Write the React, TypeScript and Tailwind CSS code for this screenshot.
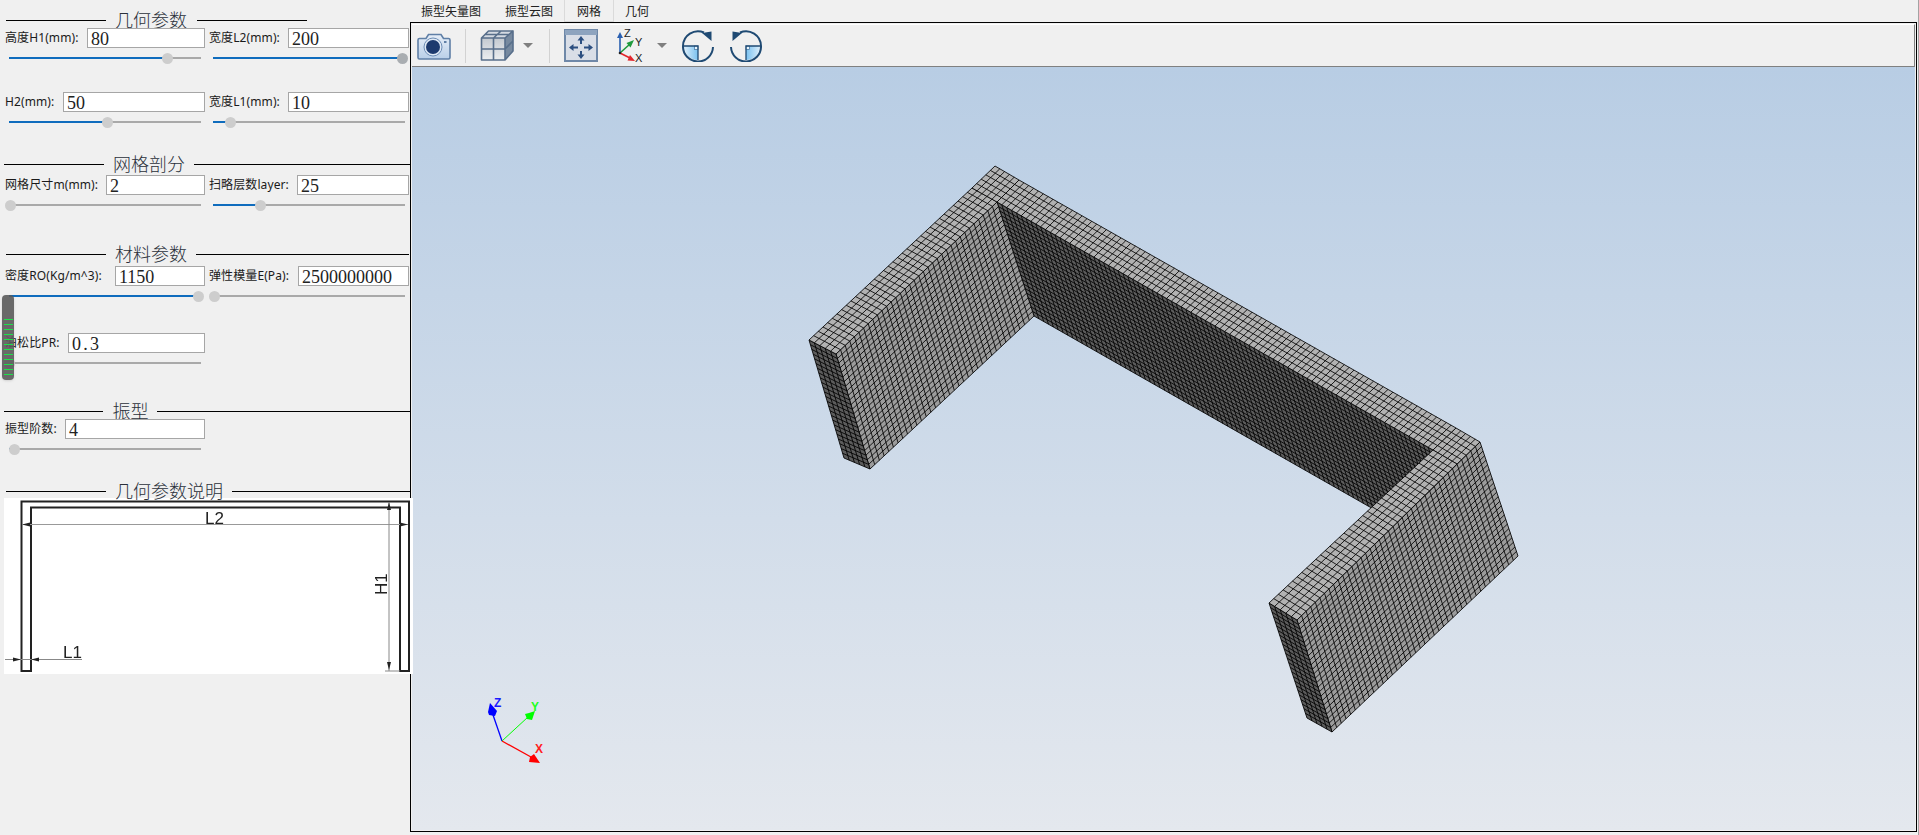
import React, { useMemo } from 'react';

type Pt = [number, number];

type FieldTypes = {
  label: string;
  value: string;
  inputWidth: string;
  thumb: number;
  hot?: boolean;
  spaced?: boolean;
};

// builds the element lines of one mesh face, a -> b is u, a -> d is v
const meshPath = (a: Pt, b: Pt, c: Pt, d: Pt, nu: number, nv: number) => {
  const at = (u: number, v: number) => {
    const x = a[0] * (1 - u) * (1 - v) + b[0] * u * (1 - v) + c[0] * u * v + d[0] * (1 - u) * v;
    const y = a[1] * (1 - u) * (1 - v) + b[1] * u * (1 - v) + c[1] * u * v + d[1] * (1 - u) * v;
    return `${x.toFixed(1)} ${y.toFixed(1)}`;
  };
  let path = '';
  for (let i = 0; i <= nu; i++) {
    path += `M${at(i / nu, 0)}L${at(i / nu, 1)}`;
  }
  for (let j = 0; j <= nv; j++) {
    path += `M${at(0, j / nv)}L${at(1, j / nv)}`;
  }
  return path;
};

const LIGHT = '#b2b2b2';
const MID = '#9c9c9c';
const DARK = '#5c5c5c';

const faces: { pts: [Pt, Pt, Pt, Pt]; nu: number; nv: number; fill: string }[] = [
  { pts: [[997, 202], [1433, 450], [1470, 564], [1034, 316]], nu: 90, nv: 25, fill: DARK },
  { pts: [[836, 354], [997, 202], [1034, 316], [870, 469]], nu: 35, nv: 25, fill: MID },
  { pts: [[809, 340], [836, 354], [870, 469], [844, 458]], nu: 5, nv: 25, fill: DARK },
  { pts: [[809, 340], [972, 188], [997, 202], [836, 354]], nu: 35, nv: 5, fill: LIGHT },
  { pts: [[972, 188], [995, 166], [1019, 180], [997, 202]], nu: 5, nv: 5, fill: LIGHT },
  { pts: [[1019, 180], [1456, 428], [1433, 450], [997, 202]], nu: 90, nv: 5, fill: LIGHT },
  { pts: [[1456, 428], [1480, 442], [1457, 464], [1433, 450]], nu: 5, nv: 5, fill: LIGHT },
  { pts: [[1480, 442], [1518, 556], [1332, 732], [1297, 620]], nu: 25, nv: 40, fill: MID },
  { pts: [[1269, 603], [1297, 620], [1332, 732], [1307, 718]], nu: 5, nv: 25, fill: DARK },
  { pts: [[1433, 450], [1457, 464], [1297, 620], [1269, 603]], nu: 5, nv: 35, fill: LIGHT },
];

const Mesh = () => {
  const paths = useMemo(
    () => faces.map(f => ({ ...f, d: meshPath(f.pts[0], f.pts[1], f.pts[2], f.pts[3], f.nu, f.nv) })),
    [],
  );
  return (
    <svg className="block" width="1503" height="763" viewBox="412 67 1503 763">
      {paths.map((f, i) => (
        <g key={i}>
          <polygon points={f.pts.map(p => p.join(',')).join(' ')} fill={f.fill} />
          <path d={f.d} stroke="#000" strokeWidth="0.85" fill="none" />
        </g>
      ))}
      {/* axis triad */}
      <line x1="502" y1="741" x2="492" y2="712" stroke="#0000ff" strokeWidth="1.3" />
      <polygon points="490,703 497,711 495,716 489,715 488,712" fill="#0000ff" />
      <line x1="502" y1="741" x2="528" y2="717" stroke="#00ff00" strokeWidth="1" />
      <polygon points="535,711 532,720 527,719 525,714 529,713" fill="#00ff00" />
      <line x1="502" y1="741" x2="531" y2="757" stroke="#ff0000" strokeWidth="1.3" />
      <polygon points="540,763 529,762 530,757 534,754" fill="#ff0000" />
      <text x="494" y="707" fontSize="12" fontWeight="700" fill="#1a1aff" fontFamily="Liberation Sans">Z</text>
      <text x="531" y="711" fontSize="12" fontWeight="700" fill="#22ff22" fontFamily="Liberation Sans">Y</text>
      <text x="535" y="753" fontSize="12" fontWeight="700" fill="#ff2020" fontFamily="Liberation Sans">X</text>
    </svg>
  );
};

const SectionTitle = ({ title, start, gapRight, end }: { title: string; start: string; gapRight: string; end: string }) => (
  <div className={`flex items-center h-4 ${start}`}>
    <div className="w-[100px] h-px bg-black" />
    <span className="ml-[9px] text-[18px] leading-4 text-[#2b303b] font-light whitespace-nowrap">{title}</span>
    <div className={`h-px bg-black ${gapRight} ${end}`} />
  </div>
);

const Slider = ({ thumb, hot }: { thumb: number; hot?: boolean }) => (
  <div className="relative ml-[4px] mt-1 w-[192px] h-3 flex items-center">
    <div className="w-full h-[2px] bg-[#a9a9a9]" />
    <div className="absolute left-0 top-[5px] h-[2px] bg-[#0f6cbd]" style={{ width: thumb }} />
    <div
      className={`absolute top-[0.5px] w-[11px] h-[11px] rounded-full ${hot ? 'bg-[#a9adb1]' : 'bg-[#cdcdcd]'}`}
      style={{ left: thumb - 5.5 }}
    />
  </div>
);

const Field = ({ label, value, inputWidth, thumb, hot, spaced }: FieldTypes) => (
  <div className="w-[200px]">
    <div className="flex items-center justify-between h-5">
      <span className="text-xs tracking-[0.1px] whitespace-nowrap text-[#1a1a1a]">{label}</span>
      <div
        className={`h-5 ${inputWidth} bg-white border border-[#a6a6a6] pl-[3px] pt-px flex items-center text-[18px] leading-none text-[#222] font-['Liberation_Serif',serif] ${spaced ? 'tracking-[2.25px]' : ''}`}
      >
        {value}
      </div>
    </div>
    <Slider thumb={thumb} hot={hot} />
  </div>
);

const Row = ({ className, children }: { className: string; children: React.ReactNode }) => (
  <div className={`flex pl-[5px] gap-[4px] ${className}`}>{children}</div>
);

const DimArrow = ({ points }: { points: string }) => <polygon points={points} fill="#222" />;

const ParamSketch = () => (
  <div className="ml-[4px] w-[409px] h-[176px] bg-white">
    <svg className="block blur-[0.35px]" width="409" height="176" viewBox="4 498 409 176">
      <path d="M21.5 671V501.5H409V671H400V507.5H31V671Z" fill="none" stroke="#222" strokeWidth="2" />
      <line x1="22" y1="524.5" x2="408" y2="524.5" stroke="#999" strokeWidth="1" />
      <DimArrow points="22,524.5 30,522.5 30,526.5" />
      <DimArrow points="408,524.5 400,522.5 400,526.5" />
      <line x1="389" y1="502" x2="389" y2="671" stroke="#888" strokeWidth="1" />
      <line x1="385" y1="671" x2="400" y2="671" stroke="#888" strokeWidth="1" />
      <DimArrow points="389,502 387,510 391,510" />
      <DimArrow points="389,670 387,662 391,662" />
      <line x1="5" y1="659.5" x2="82" y2="659.5" stroke="#888" strokeWidth="1" />
      <DimArrow points="21,659.5 13,657.5 13,661.5" />
      <DimArrow points="31,659.5 39,657.5 39,661.5" />
      <text x="205" y="524" fontSize="17" fill="#222" fontFamily="Liberation Sans">L2</text>
      <text x="63" y="658" fontSize="17" fill="#222" fontFamily="Liberation Sans">L1</text>
      <text x="0" y="0" fontSize="17" fill="#222" fontFamily="Liberation Sans" transform="translate(387 595) rotate(-90)">H1</text>
    </svg>
  </div>
);

const CameraIcon = () => (
  <svg width="34" height="30" viewBox="0 0 34 30" className="ml-[5px] shrink-0">
    <defs>
      <linearGradient id="cam" x1="0" y1="0" x2="0" y2="1">
        <stop offset="0" stopColor="#e6eef8" />
        <stop offset="1" stopColor="#b9cfe8" />
      </linearGradient>
    </defs>
    <path d="M2.5 7.5H9L11.5 3.5H24L26.5 7.5H31.5Q33 7.5 33 9V26.5Q33 28 31.5 28H2.5Q1 28 1 26.5V9Q1 7.5 2.5 7.5Z" fill="url(#cam)" stroke="#5f7fa6" strokeWidth="1.6" />
    <circle cx="16" cy="16" r="9" fill="#dfe9f5" stroke="#6d8db5" strokeWidth="1" />
    <circle cx="16" cy="16" r="7" fill="#1d3a6e" />
    <rect x="27" y="10" width="2.5" height="2" fill="#5f7fa6" />
  </svg>
);

const CubeIcon = () => (
  <svg width="34" height="31" viewBox="0 0 34 31" className="ml-[14px] shrink-0">
    <defs>
      <linearGradient id="cubeFront" x1="0" y1="0" x2="0" y2="1">
        <stop offset="0" stopColor="#c3c9d0" />
        <stop offset="1" stopColor="#eceef0" />
      </linearGradient>
    </defs>
    <path d="M1.5 8L8.5 1H33L25 8Z" fill="#d4dae2" />
    <path d="M25 8L33 1V21L25 30Z" fill="#76899f" />
    <rect x="1.5" y="8" width="23.5" height="22" fill="url(#cubeFront)" />
    <path
      d="M1.5 8L8.5 1H33L25 8ZM25 8L33 1V21L25 30ZM1.5 8H25V30H1.5ZM13.5 8V30M1.5 19H25M13.5 8L21 1M5 4.5H29M25 19L33 11"
      stroke="#586f8b"
      strokeWidth="1.6"
      fill="none"
      strokeLinejoin="round"
    />
  </svg>
);

const DropTriangle = ({ className }: { className: string }) => (
  <svg width="10" height="5" viewBox="0 0 10 5" className={`shrink-0 ${className}`}>
    <polygon points="0,0 10,0 5,5" fill="#7f7f7f" />
  </svg>
);

const FitIcon = () => (
  <svg width="34" height="33" viewBox="0 0 34 33" className="ml-[14px] shrink-0">
    <rect x="1" y="1" width="32" height="31" fill="#d9dee7" stroke="#6f88a8" strokeWidth="2" />
    <rect x="1" y="1" width="32" height="5" fill="#8ea4bf" />
    <path d="M17 10V15M17 22V27M8 18.5H14M20 18.5H26" stroke="#2c4f80" strokeWidth="2" />
    <path d="M17 7L13.5 11.5H20.5ZM17 30L13.5 25.5H20.5ZM5 18.5L9.5 15V22ZM29 18.5L24.5 15V22Z" fill="#2c4f80" />
  </svg>
);

const AxesIcon = () => (
  <svg width="34" height="34" viewBox="0 0 34 34" className="ml-[14px] shrink-0">
    <path d="M8 24V7" stroke="#2a5fb0" strokeWidth="1.6" />
    <polygon points="8,3 5,9 11,9" fill="#2a5fb0" />
    <path d="M8 24L18 15" stroke="#1f9a3c" strokeWidth="1.6" />
    <polygon points="22,11 14.5,14 18.5,18.5" fill="#1f9a3c" />
    <path d="M8 24L18 29" stroke="#e3262b" strokeWidth="1.6" />
    <polygon points="23,32 15.5,31.5 18,26" fill="#e3262b" />
    <circle cx="8" cy="24" r="1.3" fill="#222" />
    <text x="12" y="8" fontSize="11" fill="#222" fontFamily="Liberation Sans">Z</text>
    <text x="23" y="17" fontSize="11" fill="#222" fontFamily="Liberation Sans">Y</text>
    <text x="23" y="33" fontSize="11" fill="#222" fontFamily="Liberation Sans">X</text>
  </svg>
);

const RotateIcon = ({ className, id }: { className: string; id: string }) => (
  <svg width="32" height="32" viewBox="0 0 32 32" className={`shrink-0 ${className}`}>
    <defs>
      <linearGradient id={id} x1="0" y1="0" x2="1" y2="0">
        <stop offset="0" stopColor="#dceefb" />
        <stop offset="1" stopColor="#79c1f0" />
      </linearGradient>
    </defs>
    <path d="M2 16H16V30A14 14 0 0 1 2 16Z" fill={`url(#${id})`} />
    <rect x="12.5" y="16" width="3.5" height="3.5" fill="#e8f4fc" stroke="#3e6f9c" strokeWidth="0.7" />
    <path d="M1.5 16H16V30" stroke="#1f4a73" strokeWidth="1.3" fill="none" />
    <path d="M31 17A15 15 0 0 1 1 16A15 15 0 0 1 22 2.5" fill="none" stroke="#1f4a73" strokeWidth="2" />
    <polygon points="20,3 29.5,1.5 29.5,11" fill="#1f4a73" />
  </svg>
);

const ToolSep = ({ className }: { className: string }) => <div className={`w-px h-[34px] bg-[#d2d2d2] shrink-0 ${className}`} />;

const tabs = ['振型矢量图', '振型云图', '网格', '几何'];

const App: React.FC = () => {
  return (
    <div className="flex w-[1919px] h-[835px] overflow-hidden bg-[#f0f0f0] text-[#222] font-['Noto_Sans','Noto_Sans_CJK_SC',sans-serif]">
      <aside className="relative z-10 w-[410px] shrink-0 pt-3">
        <SectionTitle title="几何参数" start="ml-[6px]" gapRight="ml-[10px]" end="w-[110px]" />
        <Row className="">
          <Field label="高度H1(mm):" value="80" inputWidth="w-[118px]" thumb={158} />
          <Field label="宽度L2(mm):" value="200" inputWidth="w-[121px]" thumb={189} hot />
        </Row>
        <Row className="mt-7">
          <Field label="H2(mm):" value="50" inputWidth="w-[142px]" thumb={98} />
          <Field label="宽度L1(mm):" value="10" inputWidth="w-[121px]" thumb={17} />
        </Row>

        <div className="mt-7">
          <SectionTitle title="网格剖分" start="ml-[4px]" gapRight="ml-[9px]" end="w-[216px]" />
        </div>
        <Row className="mt-[3px]">
          <Field label="网格尺寸m(mm):" value="2" inputWidth="w-[99px]" thumb={1} />
          <Field label="扫略层数layer:" value="25" inputWidth="w-[112px]" thumb={47} />
        </Row>

        <div className="mt-[35px]">
          <SectionTitle title="材料参数" start="ml-[6px]" gapRight="ml-[9px]" end="w-[213px]" />
        </div>
        <Row className="mt-1">
          <Field label="密度RO(Kg/m^3):" value="1150" inputWidth="w-[90px]" thumb={189} />
          <Field label="弹性模量E(Pa):" value="2500000000" inputWidth="w-[111px]" thumb={1} />
        </Row>
        <Row className="mt-[31px]">
          <Field label="泊松比PR:" value="0.3" inputWidth="w-[137px]" thumb={0} spaced />
        </Row>

        <div className="mt-[34px]">
          <SectionTitle title="振型" start="ml-[4px]" gapRight="ml-[9px]" end="w-[254px]" />
        </div>
        <Row className="">
          <Field label="振型阶数:" value="4" inputWidth="w-[140px]" thumb={5} />
        </Row>

        <div className="mt-[29px]">
          <SectionTitle title="几何参数说明" start="ml-[6px] h-[14px]" gapRight="ml-[9px]" end="w-[178px]" />
        </div>
        <ParamSketch />

        {/* floating level widget over the left edge */}
        <div className="absolute left-[2px] top-[295px] w-3 h-[85px] rounded-[4px] bg-[#5a5a5a]/90 shadow-sm flex flex-col gap-1 pt-6 px-[1.5px]">
          {Array.from({ length: 12 }).map((_, i) => (
            <div key={i} className="h-px shrink-0 bg-[#1fe04a]" />
          ))}
        </div>
      </aside>

      <main className="flex-1 flex flex-col pr-px border-r border-[#a3a3a3] pb-[3px]">
        <div className="flex h-[22px] shrink-0 -ml-px text-xs leading-4">
          {tabs.map(tab => (
            <div
              key={tab}
              className={
                tab === '网格'
                  ? 'px-3 pt-[4px] border-x border-b border-[#dadada] -mx-px'
                  : 'px-3 pt-[4px]'
              }
            >
              {tab}
            </div>
          ))}
        </div>
        <div className="flex-1 border border-black p-px flex flex-col min-h-0">
          <div className="h-[43px] shrink-0 flex items-center border-t border-t-white border-b border-b-[#808080] border-r border-r-[#808080]">
            <CameraIcon />
            <ToolSep className="ml-[14px]" />
            <CubeIcon />
            <DropTriangle className="ml-[9px]" />
            <ToolSep className="ml-[16px]" />
            <FitIcon />
            <AxesIcon />
            <DropTriangle className="ml-[11px]" />
            <RotateIcon className="ml-[15px]" id="rotA" />
            <RotateIcon className="ml-[16px] -scale-x-100" id="rotB" />
          </div>
          <div className="flex-1 min-h-0 overflow-hidden bg-gradient-to-b from-[#b8cde4] to-[#e4e8ee]">
            <Mesh />
          </div>
        </div>
      </main>
    </div>
  );
};

export default App;
